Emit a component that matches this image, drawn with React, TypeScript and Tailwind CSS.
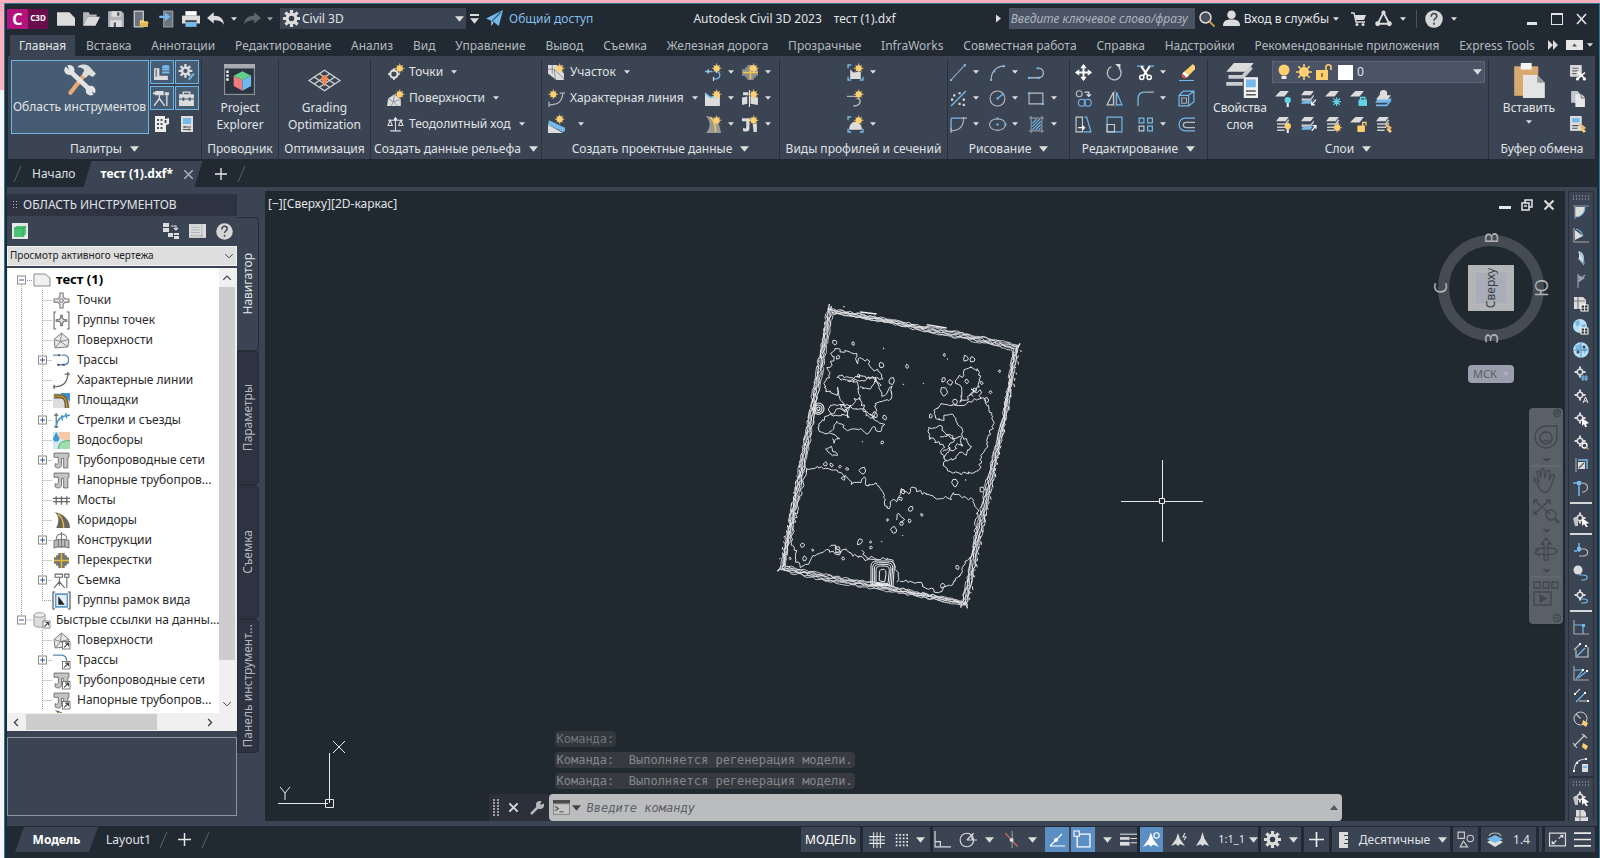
import type { ReactNode } from 'react';

const G = '#dcdcdc';
const B = '#74b9ea';
const Y = '#ffd070';

const line = (d: string, stroke = G, w = 1.1) => <path d={d} fill="none" stroke={stroke} strokeWidth={w} />;
const fill = (d: string, color = G) => <path d={d} fill={color} />;

// small "new object" sparkle in the corner of many ribbon icons
const spark = (x: number, y: number) => (
  <g transform={`translate(${x} ${y})`}>
    <path d="M0-4.500V4.500M-4.500 0H4.500M-3-3L3 3M3-3L-3 3" stroke={Y} strokeWidth=".8" />
    <circle r="2.900" fill={Y} />
  </g>
);

const sheets = (
  <>
    {fill('M4 1h9L10 5H1z')}
    {fill('M3 6l-1.500 2H10L13 4v2L10 10H1z', '#c8ccd0')}
    {fill('M2.500 10.500L1 13h9l3-5v1.500z', B)}
  </>
);
const sheetsGrey = (
  <>
    {fill('M4 1h9L10 5H1z')}
    {line('M2 7.500h8l3-4M2 10.500h8l3-4M2 13.500h7', '#c8ccd0', 1.4)}
  </>
);
const sheet = fill('M5 1h8L9 6H0z');
const target = (
  <>
    {line('M7 1.500v3M7 9.500v3M1.500 7h3M9.500 7h3', G, 2)}
    <circle cx="7" cy="7" r="2.700" fill="none" stroke={G} strokeWidth="1.500" />
  </>
);
const link = (
  <>
    <rect x="9" y="9" width="7" height="7" fill="#fff" stroke="#666" strokeWidth=".8" />
    {line('M10.500 14.500l4-4m-3 0h3v3', '#444')}
  </>
);
const pipe = (
  <path d="M1 1h14v4h-1v10h-4V6H8v6c0 3-3 4-6 2v-3c2 1 3 0 3-1V5H1z" fill="#c4c4c4" stroke="#666" strokeWidth=".8" />
);
const levels = (
  <>
    <path d="M1 7L8 1l7 6-1 7-12 1z" fill="#e8e8e8" stroke="#777" strokeWidth=".9" />
    {line('M1 7l6 2 8-2M8 1L7 9M2 15l5-6 7 5', '#777', 0.8)}
  </>
);

const icons: Record<string, ReactNode> = {
  newFile: <path d="M0 2h11l5 5v7H0z" fill={G} />,
  open: <>{fill('M1 14V2h5l1 2h6v2H5z', '#b5b5b5')}{fill('M5 6h11l-4 8H1z')}</>,
  save: <>{fill('M1 1h12l2 2v12H1z', '#aeb4ba')}{fill('M4 1h8v5H4zM3 9h10v6H3z')}{fill('M9 2h2v3H9zM6 11h2v4H6z', '#555')}</>,
  openWeb: <><rect x="2" y="1" width="8" height="14" fill="#6c737c" stroke={G} />{fill('M7 15V9h3l1 1h3v5z', Y)}{fill('M8 11h7l-2 4H7z', '#e6b557')}</>,
  saveWeb: <><rect x="6" y="1" width="8" height="14" fill="#6c737c" stroke="#9aa0a7" />{fill('M2 5h5V2l5 4-5 4V7H2z', B)}</>,
  print: <>{fill('M3 1h10v4H3z', '#fff')}{fill('M0 5h16v7H0z')}{fill('M3 9h10v2H3z', '#40474f')}{fill('M3 11h10v4H3z', B)}</>,
  undo: fill('M0 7l6-5v3c6 0 9 3 9 8-2-3-4-4-9-4v3z'),
  redo: fill('M16 7l-6-5v3c-6 0-9 3-9 8 2-3 4-4 9-4v3z', '#5d656f'),
  plane: <>{fill('M0 8L16 0l-4 15-5-4z', B)}{fill('M5 10v5l2-3z', '#b9defa')}{line('M6 10l8-8', '#26506e')}</>,
  search: <><circle cx="6.500" cy="6.500" r="5.500" fill="#4a5058" stroke={G} strokeWidth="1.500" />{line('M10.500 10.500l5 5', '#c99458', 2)}</>,
  user: <><circle cx="8" cy="4.500" r="4" fill={G} />{fill('M0 15c0-4 2-5 5-6h6c3 1 5 2 5 6z')}</>,
  cart: <>{line('M0 2h3l2 9h9', G, 1.3)}{fill('M3 4h12l-2 5H5z')}<circle cx="6" cy="13.500" r="1.500" fill={G} /><circle cx="12" cy="13.500" r="1.500" fill={G} /></>,
  hub: <>{line('M8 2.500L2.500 13h11z', G, 1.800)}<circle cx="8" cy="2.500" r="2" fill={G} /><circle cx="2.500" cy="13" r="2.300" fill={G} /><circle cx="13.500" cy="13" r="2.300" fill={G} /></>,
  help: <><circle cx="8" cy="8" r="7.800" fill="#d6d6d6" />{line('M5.500 6c0-4 5-3.500 5-.5 0 2-2.500 2-2.500 4M8 11v2', '#3b4453', 1.400)}</>,
  gear: (
    <>
      <g stroke={G} strokeWidth="3"><path d="M8 0v16M0 8h16M2.300 2.300l11.400 11.400M13.700 2.300L2.300 13.700" /></g>
      <circle cx="8" cy="8" r="5.500" fill={G} /><circle cx="8" cy="8" r="2.600" fill="#333c48" />
    </>
  ),
  tools: (
    <>
      <path d="M3.500 14L10.500 5" stroke="#e9a877" strokeWidth="2" strokeLinecap="round" />
      {fill('M7 1.500c3-1.500 5-.5 6 .8L15.500 5 14 6.600l-1.800-1L10.500 7 9 5.500l1-2C9.500 2.500 8.500 2 7 2z')}
      <path d="M3.500 4l9 8.500" stroke="#e4e4e4" strokeWidth="2.200" />
      <circle cx="3" cy="3.300" r="2.400" fill="#e4e4e4" /><circle cx="13" cy="13" r="2.300" fill="#e4e4e4" />
      {fill('M0 .5l3 2.800L1.500 0H0zM16 15l-2.500-1.700L15 16h1z', '#466079')}
    </>
  ),
  toolspace: <>{fill('M1 4h5v7h8v4H1z')}{line('M3 5v7', '#3f5a73', 1)}<ellipse cx="12" cy="2.500" rx="3.500" ry="1.500" fill={B} />{fill('M8.500 4h7v2h-7zM8.500 7h7v2h-7z', B)}</>,
  settings: <><g stroke={G} strokeWidth="2.200"><path d="M7 0v13M.5 6.500h13M2.400 2l9 9M11.500 2L2.500 11" /></g><circle cx="7" cy="6.500" r="4.200" fill={G} /><circle cx="7" cy="6.500" r="2" fill="#3f5a73" />{line('M10 15l5-6', B, 1.800)}</>,
  survey: <>{fill('M2 1h8v4H2zM0 2h2v2H0zM11 2h4v3h-4z')}{line('M6 5v4M6 8l-5 7M6 8l5 7M13 5v10', G, 1.300)}</>,
  toolbox: <>{line('M5 4V2h6v2', G, 1.400)}{fill('M1 4h14v4H1zM1 9h14v6H1z')}{fill('M4 7h2v3H4zM10 7h2v3h-2z', '#3f5a73')}</>,
  calc: <>{fill('M1 0h10v3l4-1v6l-3 1v7H1z', '#eee')}<g fill="#4a5261"><path d="M3 3h2v2H3zM6.500 3h2v2h-2zM3 7h2v2H3zM6.500 7h2v2h-2zM3 11h2v2H3zM6.500 11h2v2h-2zM10.500 4h2v3h-2z" /></g></>,
  props: <>{fill('M2 0h12v16H2z')}{fill('M4 2h8v6H4z', B)}{line('M4 11h8M4 13.500h8M6 10v2M10 12.500v2', '#555')}</>,
  points: <><circle cx="6.500" cy="9.500" r="3.500" fill="none" stroke={G} strokeWidth="2" />{line('M6.500 4v3M6.500 12v3M1 9.500h3M9 9.500h3', G, 1.600)}{spark(12, 4)}</>,
  surfaces: <>{fill('M0 15l1-7 6-4 6 5v6z')}{line('M1 8l5 3 6-2M6 11l-2 4M6 11l4 4M7 4l-1 7', '#828a94', 0.8)}{spark(12, 4)}</>,
  traverse: <>{line('M8 1v13M3 14h10M1 4h14M3 4L1 9h4zM13 4l-2 5h4z', G, 1)}<circle cx="8" cy="3" r="1.500" fill={G} /></>,
  parcel: <>{fill('M0 1h15v14H8L0 9z')}{line('M0 5h6l9 9M4 1v8M6 5l1 10', '#7f8790', 0.8)}{fill('M8 1h7v8z', '#3b4453')}{spark(11, 4)}</>,
  feature: <>{line('M1 14c8 0 12-2 13-11M1 11v5M11 3h5', '#aeb3b9', 1.200)}{spark(5, 4)}</>,
  grading: <>{fill('M0 8v8h14z')}{fill('M1 4l15 7v3l-2 1L0 8z', B)}{spark(11, 3)}</>,
  alignment: <>{line('M0 7h7M9 7h2c4 1 4 7-1 7H8', B, 1.300)}{line('M3 5v4M8 12v4', G)}{spark(11, 4)}</>,
  profile: <>{fill('M0 3l5 4 9-3v11H0z')}{line('M0 3l5 4 4-1', B, 1.500)}{spark(11, 4)}</>,
  corridor: <>{fill('M1 0c9 1 13 6 14 16H1C6 10 5 5 1 0z', '#999')}{line('M5 1c4 4 5 8 5 14', '#e9c551', 1.500)}{spark(11, 4)}</>,
  intersection: <>{fill('M5 1h6v14H5zM0 5h15v6H0zM3 3h10v10H3z', '#8f8f8b')}{line('M8 2v12M1 8h14', '#e9c551', 1.400)}{spark(11, 4)}</>,
  assembly: <>{fill('M0 7l5-1v7l-5 1zM8 6l7 1v7l-7-1zM1 2h5v3H1z')}{line('M7 0v16', '#eee', 1)}{spark(11, 4)}</>,
  pipes: <>{fill('M0 2h8v3H7v7c0 3-4 3-6 2v-3c2 1 3 1 3-1V5H0zM10 7h4v8h-3z')}{spark(11, 4)}</>,
  profileView: <>{line('M1 4V1h3M1 12v3h3M12 15h3v-3', B, 1.300)}{fill('M3 5l3 3 7-1v7H3z')}{spark(11, 4)}</>,
  sampleLines: <>{line('M0 6h9M9 8c5-1 5 7-3 7', '#aeb3b9', 1.400)}{spark(11, 4)}</>,
  sectionView: <>{line('M1 4V1h3M1 12v3h3M12 15h3v-3', B, 1.300)}{fill('M2 13c0-10 12-10 12 0z')}{spark(11, 4)}</>,
  line: <>{line('M1 15L14 1', '#8fa7ba')}{fill('M0 14h2v2H0zM13 0h2v2h-2z', B)}</>,
  arc: <>{line('M2 15C2 7 7 2 14 2', '#aeb3b9')}{fill('M1 14h2v2H1zM4 6h2v2H4zM13 1h2v2h-2z', B)}</>,
  pline: <>{line('M1 13h9c6 0 6-9 0-9', '#aeb3b9', 1.300)}{fill('M0 12h2v2H0zM9 12h2v2H9zM8 3h2v2H8z', B)}</>,
  multiPoint: <>{line('M1 15L15 1', B, 1.200)}{fill('M3 4h2v2H3zM8 2h2v2H8zM1 8h2v2H1zM8 12h2v2H8zM12 8h2v2h-2zM12 13h2v2h-2z')}</>,
  circle: <><circle cx="8" cy="8" r="7" fill="none" stroke="#b9bdc2" />{line('M8 8l5-4', B, 1.300)}{fill('M7 7h2v2H7zM12 3h2v2h-2z', B)}</>,
  rect: <>{line('M1 3h13v10H1z', '#b9bdc2')}{fill('M0 2h2v2H0zM13 12h2v2h-2z', B)}</>,
  curve: <>{line('M1 2h9M1 2v12', B, 1.200)}{line('M1 14c8 0 12-4 12-13M10 2h6M1 11v5', '#b9bdc2', 1)}</>,
  ellipse: <><ellipse cx="8" cy="8" rx="7.500" ry="5.500" fill="none" stroke="#b9bdc2" />{fill('M7 7h2v2H7zM14.500 7h2v2h-2zM7 1.500h2v2H7z', B)}</>,
  hatch: <>{line('M1 2h14M1 14h14M3 0v16M13 0v16', '#8d949d')}{line('M4 7l4-4M4 10l7-7M4 13l8-8M7 13l5-5M10 13l2-2', B)}</>,
  move: <>{line('M8 1v14M1 8h14', '#fff', 1.800)}{fill('M8 0l3 4H5zM8 16l3-4H5zM0 8l4-3v6zM16 8l-4-3v6z', '#fff')}</>,
  rotate: <>{line('M5 2.500a6.500 6.500 0 1 0 7 1', '#b9bdc2', 1.300)}{fill('M8.500 0h5v4.500z')}</>,
  trim: <>{line('M0 2h7M11 2h5', B, 1.200)}{line('M4 2l6 9M12 2L6 11', '#fff', 1.900)}<circle cx="4.500" cy="12.500" r="2" fill="none" stroke="#fff" strokeWidth="1.400" /><circle cx="11.500" cy="12.500" r="2" fill="none" stroke="#fff" strokeWidth="1.400" /></>,
  erase: <>{fill('M14 0l2 2v3l-7 7-4-4z', Y)}{fill('M6 7l4 4-2 2-4-4z', '#fff')}{fill('M4 9l4 4c-2 2-6-1-4-4z', '#e0524d')}{line('M1 15.500h14', B, 1)}</>,
  copy: <><circle cx="4" cy="3.500" r="2.800" fill="none" stroke="#b9bdc2" /><circle cx="6.500" cy="12" r="3.300" fill="none" stroke={B} /><circle cx="12" cy="12" r="3.300" fill="none" stroke={B} />{line('M9 2h4v4M11 4l2 2 2-2')}</>,
  mirror: <>{line('M7 2v12H1z', '#c5c9cd')}{line('M10 2v12h5z', B)}{line('M8.500 0v16', '#8d949d', 0.8)}</>,
  fillet: <>{line('M1 15V8c0-5 3-6 7-6', B, 1.200)}{line('M8 2h8', '#b9bdc2')}</>,
  box3d: <>{line('M1 5h9v10H1zM1 5l4-4h10v10l-5 4M10 5l5-4', B)}{line('M3.500 7.500h4.500v5H3.500z', '#a5abb3')}</>,
  stretch: <>{line('M1 1h6v14H1z', '#c5c9cd')}{line('M9 1h2l4 14H8', B)}{line('M3 11h6M7 9l2 2-2 2', '#fff')}</>,
  scale: <>{line('M1 1h14v14H1z', B)}{line('M1 8h7v7H1z', '#c5c9cd')}</>,
  array: <>{line('M2 2h4.500v4.500H2zM10 2h4.500v4.500H10zM10 9.500h4.500V14H10z', B)}{line('M2 9.500h4.500V14H2z', '#c5c9cd')}</>,
  offset: <>{line('M16 2H7c-8 0-8 12 0 12h9', B)}{line('M16 6H8c-4 0-4 5 0 5h8', '#b9bdc2')}</>,
  lyOff: <>{sheet}{line('M12 12v4', '#eee', 2)}<circle cx="12" cy="9.500" r="3" fill="#62d5e4" /></>,
  lyIso: <>{sheets}{line('M15 9l-4 5m0-3v3h3', '#fff', 1.200)}</>,
  lyFreeze: <>{sheet}{line('M11 7v8M7 11h8M8 8l6 6M14 8l-6 6', '#62d5e4', 1.200)}</>,
  lyLock: <>{sheet}{line('M10 10V7h4v3', '#62d5e4', 1.300)}{fill('M8 9h8v6H8z', '#62d5e4')}</>,
  lyMatch: <>{line('M1 14.500h10l4-5', B, 1.500)}{fill('M3 8h13l-4 4H0z', B)}{fill('M4 5h11l-3 4H1z')}<circle cx="8" cy="3.500" r="3.500" fill={G} /></>,
  lyOn: <>{sheetsGrey}{line('M12 12v4', '#eee', 2)}<circle cx="12" cy="9.500" r="3" fill={Y} /></>,
  lyUniso: <>{sheets}{line('M11 14l4-5m-3 0h3v3', '#fff', 1.200)}</>,
  lyThaw: <>{sheetsGrey}{spark(11.5, 11)}</>,
  lyUnlock: <>{sheet}{line('M12 10V6h3v3', Y, 1.300)}{fill('M7 9h7v6H7z', Y)}</>,
  lyPrev: <>{sheetsGrey}{fill('M9 8l5 5 2-2-5-4z', '#e9b977')}{fill('M12 11l4 3-2 2-3-3z', Y)}</>,
  layersBig: <>{fill('M5 0h9l-3 4H1.500z')}{line('M2.500 6.300H9L13 2M1.500 9.500H9', '#c8ccd0', 1.700)}{fill('M9.500 6.500h6.500V16H9.500z', '#f2f2f2')}{fill('M10.500 7.500H15v3.600h-4.500z', B)}{line('M10.500 12.800H15M10.500 14.500H15', '#555', 0.6)}</>,
  bulb: <><circle cx="8" cy="6" r="5.500" fill={Y} />{fill('M5.500 12h5v3h-5z', '#eee')}</>,
  sun: <><g stroke={Y} strokeWidth="1.600"><path d="M8 0v16M0 8h16M2.300 2.300l11.400 11.400M13.700 2.300L2.300 13.700" /></g><circle cx="8" cy="8" r="5" fill={Y} /></>,
  unlock: <>{line('M10 7V3c0-3 5-3 5 0v3', Y, 1.600)}{fill('M0 6h12v10H0z', Y)}{line('M6 9v4', '#7a5f28', 1.500)}</>,
  paste: <>{fill('M1 1.500h11V15H1z', '#d8a970')}{fill('M4 0h5v3H4z', '#f4f4f4')}{fill('M5 5.500h6.500L15 9v7H5z', '#e4e4e4')}{fill('M11.500 5.500L15 9h-3.500z', '#9a9a9a')}</>,
  cutClip: <>{fill('M1 1h11v11H1z')}{line('M3 4h6M3 6.500h6M3 9h4', '#666')}{line('M8 7l6 6M15 8l-7 6', '#fff', 1.500)}<circle cx="8" cy="14" r="1.500" fill="#fff" /><circle cx="14.500" cy="14" r="1.500" fill="#fff" /></>,
  copyClip: <>{fill('M2 1h6l2 2v9H2z', '#c3c7cb')}{fill('M6 4h6l3 3v9H6z', '#e8e8e8')}{line('M11.500 4v3.500H15', '#555', 0.8)}</>,
  pasteSpec: <>{fill('M1 0h11v14H1z')}{fill('M3 2h7v4H3z', B)}{line('M3 9h6M3 11.500h5', '#555')}{fill('M9 8l5 5 2-2-5-4z', '#e9b977')}{fill('M12 11l4 3-2 2-3-3z', Y)}</>,
  explorer: <>{fill('M0 0h16v16H0z', '#8b8f95')}{fill('M.6 2.400h14.800v13H.6z', '#2c3440')}{fill('M0 0h16v2H0z', '#a9acb0')}{fill('M1.200 3.400h1.200v1.200H1.200zM1.200 5.400h1.200v1.200H1.200zM1.200 7.400h1.200v1.200H1.200z', '#fff')}{fill('M9.500 3.800L14 6l-4.500 2.400L5 6z', '#62cf8a')}{fill('M5 6l4.500 2.400v5.400L5 11.300z', '#f07d7d')}{fill('M14 6L9.500 8.400v5.400l4.500-2.500z', '#6fb8f0')}</>,
  optimize: <>{line('M8 3l7.500 5L8 13 .5 8zM5.500 4.700L13 9.700M3 6.300l7.500 5M10.500 4.700L3 9.700M13 6.300l-7.500 5', '#d5d5d5', 0.6)}{fill('M6.300 6.800h3.400L8 11z', '#ef8a4b')}<circle cx="8" cy="7" r="1.500" fill="#ef8a4b" /></>,
  // toolspace header
  cube: <>{fill('M0 0h16v16H0z', '#e6e6e6')}{fill('M2 5l3-2h9v8l-3 3H2z', '#48c474')}{line('M2 5h9v9M11 5l3-2', '#2f9d57', 0.8)}</>,
  panorama: <>{fill('M0 0h6v4H0zM0 5h6v4H0zM5 10h5v4H5zM11 10h5v2h-5zM11 13h5v3h-5z')}{line('M8 3h5v4M11 5l2 2 2-2')}</>,
  preview: <>{fill('M0 1h16v13H0z')}{line('M2 4h8M2 6.500h8M2 9h8M12 2v11M1 12h12', '#a5a9ae', 0.8)}</>,
  // tree
  tDoc: <path d="M0 2h11l5 4v8H0z" fill="#f0f0f0" stroke="#8a8a8a" />,
  tPoint: <><g fill="none" stroke="#777"><path d="M6.500 1h3v3.500l2 2H15v3h-3.500l-2 2V15h-3v-3.500l-2-2H1v-3h3.500l2-2z" fill="#eee" /><circle cx="8" cy="8" r="1.700" /></g></>,
  tGroup: <><g fill="none" stroke="#666"><path d="M3 0H1v16h2M13 0h2v16h-2" /><path d="M7.300 3h1.400v2.500l1.800 1.800H13v1.400h-2.500l-1.800 1.800V13H7.300v-2.500L5.500 8.700H3V7.300h2.500l1.800-1.800z" fill="#ddd" /></g></>,
  tSurface: levels,
  tAlign: <>{line('M0 3h6M8 3h3c5 1 5 9-1 9H5', '#5a88b5', 1.200)}{fill('M5 2h2v2H5zM9 11h2v2H9zM4 11h2v2H4z', '#555')}</>,
  tFeature: line('M0 14c9 0 14-3 14-14M11 2h5M1 12v4', '#666', 1.200),
  tSite: <>{fill('M0 1h16v14H0z', '#ddd')}{fill('M7 1h9v8z', '#3d8fce')}{fill('M1 2h6c6 0 8 5 8 13h-4c0-7-1-9-5-9H1z', '#6e6246')}{line('M1 4h6c5 0 6 5 6 11', '#d9a520', 1)}</>,
  tCatch: <>{fill('M0 0h16v16H0z', '#cfe9f8')}{fill('M6 0h10v8L5 6z', '#f5c9a4')}{fill('M5 16c0-6 4-8 11-8v8z', '#9fdcae')}{fill('M3 0l3 6c0 4-6 4-6 0z', '#3f97d0')}{line('M5 16c0-6 4-8 11-8', '#4b9e62', 0.8)}</>,
  tTurn: <>{line('M3 1v14M1 3h4M1 14h4', '#666')}{line('M3 13C4 7 8 3 16 3M8 3l1 5M12 1l1 5', '#3f97d0', 1.300)}</>,
  tPipe: pipe,
  tBridge: <>{line('M0 6h16M0 9h16M3 4v8M8 4v8M13 4v8', '#666', 1.200)}</>,
  tRoad: <>{fill('M1 0c5 2 5 10 2 15h13C16 7 9 1 1 0z', '#66645d')}{line('M5 2c4 4 5 7 5 13', '#e4bb3a', 1.500)}</>,
  tAssembly: <><path d="M1 8l4-1v7l-4 1zM15 8l-4-1v7l4 1zM5 7h6v7H5z" fill="#bbb" stroke="#777" /><path d="M3 7c0-7 10-7 10 0M8 0v15" fill="none" stroke="#777" /></>,
  tCross: <>{fill('M5 1h6v14H5zM1 5h14v6H1z', '#77756d')}{fill('M3 3h10v10H3z', '#77756d')}{line('M8 1v14M1 8h14', '#e4bb3a', 1.300)}</>,
  tSurvey: <><g fill="none" stroke="#666"><path d="M2 2h7v3H2zM11 2h4v3h-4zM6 5v4L1 15M6 9l5 6M6 9v4M13 5v10" /></g></>,
  tFrames: <>{line('M2 0H0v16h2M14 0h2v16h-2', '#555')}<path d="M2.500 2h11v12h-11z" fill="#e6eef6" stroke="#5d9bd0" strokeWidth="1.500" />{fill('M5 4v8h6z', '#222')}</>,
  tData: <><path d="M0 3v10c0 3 11 3 11 0V3" fill="#ddd" stroke="#999" /><ellipse cx="5.500" cy="3" rx="5.500" ry="2.300" fill="#eee" stroke="#999" />{link}</>,
  tSurfaceL: <>{levels}{link}</>,
  tAlignL: <>{line('M0 3h8c4 0 5 3 5 7', '#5a88b5', 1.200)}{link}</>,
  tPipeL: <>{pipe}{link}</>,
  // side toolbar
  sArc: <>{fill('M2 3h10c0 6-4 10-10 10z')}{line('M0 2h16M2 2v13', '#8d97a3')}{line('M12 3c0 6-4 10-9 10', B)}</>,
  sAngle: <>{fill('M2 3l8 6-8 4z')}{line('M1 1v13', '#aaa')}{line('M0 15h16', '#aaa', 1)}{line('M3 2c3 1 6 3 7 7', B)}</>,
  sLens: <>{fill('M6 1c5 2 6 7 4 12L6 9z')}{line('M5 2c4 2 6 5 6 12', B)}{line('M5 8l6 7', '#aaa')}</>,
  sFlag: <>{fill('M5 2l7 3-6 4z', '#9aa3ad')}{line('M5 1v14M5 9l7-7', '#99a3ad')}</>,
  sSheet: <>{fill('M1 1h9l3 3v9H1z')}{line('M1 5h11M5 1v12', '#777')}<rect x="8" y="9" width="7" height="6" fill="#333" stroke="#fff" />{line('M11.500 9v6M8 12h7', '#fff', 0.8)}</>,
  sGlobe: <><circle cx="7" cy="7" r="7" fill="#b8e0f8" />{fill('M2 3l4-2 1 4-3 3zM8 6l5-1-2 6z', B)}<rect x="8" y="9" width="7" height="6" fill="#333" stroke="#fff" />{line('M11.500 9v6M8 12h7', '#fff', 0.8)}</>,
  sGlobe2: <><circle cx="8" cy="8" r="7.800" fill="#b8e0f8" />{fill('M2 4l5-2 1 4-4 3zM9 7l5-1-2 6z', B)}{line('M1 8h14M8 1v14', '#3b6d92', 0.7)}<circle cx="5" cy="10" r="1.500" fill="#3b4453" /><circle cx="11" cy="5" r="1.500" fill="#3b4453" /></>,
  sPtHash: <>{target}{line('M10 10v6M13 10v6M8 12h7M8 14h7', B)}</>,
  sPtA: <>{target}{line('M10 15l2.500-6L15 15M11 13h3', '#eee', 1)}</>,
  sPtCur: <>{target}{fill('M9 7l7 5-3 1 1 3-2 0-1-3-2 2z', '#fff')}</>,
  sPtZoom: <>{target}<circle cx="11.500" cy="11.500" r="2.500" fill="none" stroke="#fff" strokeWidth="1.300" />{line('M13.500 13.500l2 2', '#c99458', 1.500)}</>,
  sFrame: <>{line('M3 1v14', '#aaa')}{line('M5 3h9v9', B, 1.500)}{fill('M5 5h7v7H5z')}{line('M6 11l5-5', '#555')}</>,
  sTee: <>{line('M0 3h7M6 3v13', B, 1.500)}{line('M8 3c9 0 8 9 1 9', '#bbb', 1.200)}{fill('M4 1h4v4H4z', B)}</>,
  sCursorPt: <>{target}{fill('M0 7h5v8H2z', '#c4c4c4')}{fill('M9 7l7 5-3 1 2 3-2 0-2-3-2 2z', '#fff')}</>,
  sHook: <>{line('M1 9h3M6 1v9', B, 1.500)}{line('M5 7h6c5 0 5 7-1 7H6', '#bbb', 1.200)}{fill('M4 5h4v4H4z', B)}</>,
  sBlob: <><circle cx="5" cy="5" r="4.500" fill={G} />{line('M6 10h4c6 0 5 5 0 5H8', B, 1.200)}</>,
  sPtHook: <>{target}{line('M8 11h3c5 0 4 4 0 4H8', B, 1.200)}</>,
  sCorner: <>{line('M1 1v14h15', '#aaa')}{line('M1 6h9v9', B, 1.200)}{fill('M9 5h3v3H9z', B)}</>,
  sPoly: <>{line('M1 8l6-6M3 8v7h12V5', '#ccc')}{line('M4 14L12 6', B, 1.200)}{fill('M6 1h2v2H6zM12 3h2v2h-2z', '#fff')}</>,
  sZig: <>{line('M1 1v14h15', '#aaa')}{line('M1 5h9L3 14M5 13l8-6', B, 1.200)}{fill('M9 4h2v2H9zM13 5h2v2h-2z', '#fff')}</>,
  sPar: <>{line('M2 6l5-5M6 13h9', '#ccc')}{line('M3 14L12 5', B, 1.200)}{fill('M1 5h2v2H1zM11 4h2v2h-2zM14 12h2v2h-2z', '#fff')}</>,
  sCirc: <><circle cx="7.500" cy="7.500" r="6.500" fill="none" stroke="#ccc" />{line('M7.500 7.500L3 3', '#ccc')}{fill('M10 9l5 3-2 4-4-3z', Y)}</>,
  sDim: <>{line('M1 12L12 1M0 9l4 5M9 0l5 4', '#ccc')}{fill('M10 9l5 3-2 4-4-3z', Y)}</>,
  sArcCalc: <>{line('M1 15C1 6 5 2 14 2', '#ccc')}{fill('M0 13h2v2H0zM3 5h2v2H3zM12 1h2v2h-2z', '#fff')}{fill('M9 7h6v8H9z')}{fill('M10 9h4v2h-4z', B)}</>,
  sBlocks: <>{fill('M3 2h8l2 3v4h2v7H2V9h1z')}{line('M7 2v14M3 9h10', '#555', 0.8)}</>,
  // status bar
  grid: line('M5 1v14M8 1v14M11 1v14M1 5h14M1 8h14M1 11h14', '#e3e3e3', 0.9),
  snap: <g fill="#e3e3e3"><path d="M2 1h2v2H2zM6 1h2v2H6zM10 1h2v2h-2zM14 1h2v2h-2zM2 5h2v2H2zM6 5h2v2H6zM10 5h2v2h-2zM14 5h2v2h-2zM2 9h2v2H2zM6 9h2v2H6zM10 9h2v2h-2zM14 9h2v2h-2zM2 13h2v2H2zM6 13h2v2H6zM10 13h2v2h-2zM14 13h2v2h-2z" /></g>,
  ortho: <>{line('M1 0v15h15', G)}{line('M1 10h5v5', G)}</>,
  polar: <><circle cx="7" cy="8" r="6" fill="none" stroke={G} />{line('M7 8h9M7 8l6-6M12 8c0-2 0-3-2-4', G)}</>,
  iso: <>{line('M3 2l11 12', '#c66')}{line('M9 0v15', '#7a9a86')}<circle cx="8.500" cy="8" r="1.800" fill={G} /></>,
  otrack: <>{line('M1 14L13 2M1 14h15', '#fff')}<circle cx="7" cy="8" r="2" fill="#fff" /></>,
  osnap: <>{line('M3 3h12v12H3z', '#fff', 1.200)}<path d="M0 0h5v5H0z" fill="#5b8fc4" stroke="#fff" /></>,
  weight: <>{line('M0 3h16', G, 1)}{line('M0 7h9', G, 2.500)}{line('M0 12h9', G, 3.500)}{line('M10 7h6M10 11h6', G, 1)}</>,
  annoBlue: <>{fill('M7 1l2 6 5 7-5-2-2 2-2-2-5 2 5-7z', '#fff')}<circle cx="12" cy="4" r="2.400" fill="none" stroke="#fff" /></>,
  annoFlash: <>{fill('M7 1l2 6 5 7-5-2-2 2-2-2-5 2 5-7z')}{line('M14 1l-2 4h3l-2 3', G)}</>,
  anno: fill('M8 0l2 7 5 8-5-2-2 2-2-2-5 2 5-8z'),
  plus: line('M8 0v16M0 8h16', '#e8e8e8', 1.800),
  ruler: <>{fill('M4 0h9v3h-4v1h4v3h-3v1h3v3h-4v1h4v4H4z')}</>,
  shapes: <>{line('M1 1h6v6H1z', '#c9c9c9')}<circle cx="12.500" cy="7" r="3" fill="none" stroke="#c9c9c9" />{line('M6 9.500L10 15H3z', '#c9c9c9')}</>,
  stack: <>{line('M2 4c2-4 10-4 12 0', '#bbb')}{fill('M0 10l8-4 8 4-8 5z', '#e0e0e0')}{fill('M0 7l8-4 8 4-8 4z', B)}</>,
  full: <>{line('M.5 2h15v12H.5z', G)}{line('M9 7l4-3M10.500 4H13v2.500M7 9l-4 3M3 9.500V12h2.500', G)}</>,
  burger: line('M0 2h16M0 8h16M0 14h16', '#e8e8e8', 1.600),
  console: <>{fill('M0 1h16v14H0z', '#8a8a8a')}{fill('M1 5h14v9H1z', '#c4c5c6')}{fill('M0 1h16v3H0z', '#4a4a4a')}{line('M2 7l3 2-3 2M6 12h4', '#555')}</>,
  wrench: <>{line('M2 14l7-7', '#b5b7ba', 2.500)}<circle cx="11" cy="5" r="4" fill="#b5b7ba" />{fill('M11 5l2-5h3v3z', '#2b303b')}</>,
  cross: line('M2 2l12 12M14 2L2 14', '#d5d5d5', 3),
  chevronDown: line('M2 5l6 6 6-6', '#444', 1.600),
  chevronUp: line('M2 11l6-6 6 6', '#444', 2),
  chevronLeft: line('M10 3L5 8l5 5', '#444', 2),
  chevronRight: line('M6 3l5 5-5 5', '#444', 2),
};

function Icon({ name, size = 18 }: { name: string; size?: number }) {
  return (
    <svg viewBox="0 0 16 16" width={size} height={size} className="shrink-0 overflow-visible" aria-hidden="true">
      {icons[name]}
    </svg>
  );
}

const Caret = ({ big = false, color = G }: { big?: boolean; color?: string }) => (
  <svg viewBox="0 0 10 6" width={big ? 9 : 6} height={big ? 6 : 4} className="shrink-0" aria-hidden="true">
    <path d="M0 0h10L5 6z" fill={color} />
  </svg>
);

function IconButton({ name, label, size, className = '' }: { name: string; label?: string; size?: number; className?: string }) {
  return (
    <button aria-label={label ?? name} className={`flex items-center justify-center shrink-0 ${className}`}>
      <Icon name={name} size={size} />
    </button>
  );
}

function Title() {
  return (
    <header className="flex items-center h-[29px] text-[#e2e4e6]">
      <div className="flex items-center w-[41px] h-5 shrink-0 bg-[#6b0c4c] text-white font-bold">
        <span className="w-[21px] h-5 bg-[#b3117c] text-center text-base leading-5">C</span>
        <span className="flex-1 text-center text-[8px]">C3D</span>
      </div>
      <div className="flex items-center ml-[5px] shrink-0">
        {['newFile', 'open', 'save', 'openWeb', 'saveWeb', 'print', 'undo'].map((n) => (
          <IconButton key={n} name={n} className="w-[25px]" />
        ))}
        <button aria-label="undo list" className="w-3 flex justify-center"><Caret /></button>
        <IconButton name="redo" className="w-6" />
        <button aria-label="redo list" className="w-3 flex justify-center"><Caret color="#9aa0a7" /></button>
      </div>
      <div className="relative flex items-center w-[186px] h-[21px] shrink-0 ml-1 pl-[3px] bg-[#3b4453]">
        <Icon name="gear" size={17} />
        <select aria-label="Рабочее пространство" className="flex-1 appearance-none bg-transparent pl-0.5 outline-none">
          <option>Civil 3D</option>
        </select>
        <span className="absolute right-0.5 pointer-events-none"><Caret big /></span>
      </div>
      <button aria-label="customize" className="flex flex-col items-center gap-0.5 w-4"><i className="w-[9px] h-0.5 bg-[#dcdcdc]" /><Caret big /></button>
      <button className="flex items-center gap-1.5 ml-1 text-[#83bfe9] whitespace-nowrap"><Icon name="plane" size={17} />Общий доступ</button>
      <h1 className="flex-1 flex justify-center gap-3 whitespace-nowrap"><span>Autodesk Civil 3D 2023</span><span>тест (1).dxf</span></h1>
      <svg viewBox="0 0 5 8" width="5" height="9" className="mr-2 shrink-0"><path d="M0 0l5 4-5 4z" fill={G} /></svg>
      <input aria-label="Поиск" placeholder="Введите ключевое слово/фразу" className="w-[186px] h-[21px] px-0.5 bg-[#4a5364] italic text-xs placeholder:text-[#aeb4bc] outline-none shrink-0" />
      <IconButton name="search" size={16} className="w-6" />
      <button className="flex items-center gap-1 ml-1 whitespace-nowrap"><Icon name="user" size={17} />Вход в службы <Caret /></button>
      <IconButton name="cart" size={16} className="ml-3" />
      <button aria-label="apps" className="flex items-center gap-2 ml-2"><Icon name="hub" size={17} /><Caret /></button>
      <button aria-label="Справка" className="flex items-center gap-2 ml-2.5 pl-2 border-l border-[#4b525c]"><Icon name="help" /><Caret /></button>
      <div className="flex items-center justify-between w-[60px] ml-[70px] mr-2.5 shrink-0">
        <button aria-label="Свернуть" className="w-2.5 h-4 flex items-end"><i className="w-full h-[3px] bg-[#e2e4e6] mb-0.5" /></button>
        <button aria-label="Развернуть" className="w-3 h-3 border border-t-2 border-[#e2e4e6]" />
        <button aria-label="Закрыть"><svg width="11" height="12" viewBox="0 0 11 12"><path d="M1 1l9 10M10 1L1 11" stroke="#e2e4e6" strokeWidth="1.600" /></svg></button>
      </div>
    </header>
  );
}

const menu = [
  'Главная', 'Вставка', 'Аннотации', 'Редактирование', 'Анализ', 'Вид', 'Управление', 'Вывод', 'Съемка', 'Железная дорога',
  'Прозрачные', 'InfraWorks', 'Совместная работа', 'Справка', 'Надстройки', 'Рекомендованные приложения', 'Express Tools',
];

function Menu() {
  return (
    <nav className="flex items-center h-[23px] pl-[3px] text-[#b4b9bf]">
      <div className="flex-1 flex justify-between self-end">
        {menu.map((m, i) => (
          <button key={m} className={`h-[21px] px-[9px] whitespace-nowrap ${i === 0 ? 'bg-[#3b4453] text-[#e4e6e8]' : ''}`}>{m}</button>
        ))}
      </div>
      <button aria-label="more" className="ml-1 mr-2"><svg width="10" height="10" viewBox="0 0 10 10"><path d="M0 0l5 5-5 5zM5 0l5 5-5 5z" fill={G} /></svg></button>
      <button aria-label="ribbon state" className="flex items-center gap-1 mr-1">
        <span className="flex items-center justify-center w-[17px] h-2.5 bg-[#e6e6e6]"><svg width="5" height="4" viewBox="0 0 10 6"><path d="M0 6h10L5 0z" fill="#555" /></svg></span>
        <Caret />
      </button>
    </nav>
  );
}

function Panel({ title, caret = false, className, children }: { title: string; caret?: boolean; className: string; children: ReactNode }) {
  return (
    <section className={`flex flex-col border-r border-[#2a313c] last:border-r-0 ${className}`}>
      <div className="h-[78px] flex justify-center">{children}</div>
      <h2 className="flex items-center justify-center gap-2 h-[22px] pt-0.5 whitespace-nowrap">{title}{caret && <Caret big />}</h2>
    </section>
  );
}

// grid of small tools; names ending with "+" have a drop-down arrow
function Tools({ rows, cell }: { rows: string[][]; cell: string }) {
  return (
    <div>
      {rows.map((row) => (
        <div key={row[0]} className="flex h-[26px]">
          {row.map((r) => (
            <button key={r} aria-label={r.replace('+', '')} className={`flex items-center gap-1.5 shrink-0 ${cell}`}>
              <Icon name={r.replace('+', '')} size={17} />
              {r.endsWith('+') && <Caret />}
            </button>
          ))}
        </div>
      ))}
    </div>
  );
}

const textTool = (icon: string, label: string) => (
  <button className="flex items-center gap-[5px] h-[26px] whitespace-nowrap">
    <Icon name={icon} size={17} /><span className="pr-[3px]">{label}</span><Caret />
  </button>
);

const big = 'flex flex-col items-center leading-[17px]';

function Ribbon() {
  return (
    <div className="flex h-[103px] pt-[3px] ml-px mr-0.5 bg-[#3b4453] text-[#e0e3e6]">
      <Panel title="Палитры" caret className="w-[194px]">
        <button className="flex flex-col items-center w-[138px] h-[74px] mt-px pt-0.5 border border-[#6db3e3] bg-[#465c72] whitespace-nowrap">
          <Icon name="tools" size={34} />
          <span className="mt-0.5">Область инструментов</span>
        </button>
        <div className="grid grid-cols-2 gap-x-px ml-px mt-px content-start gap-y-0.5">
          {['toolspace', 'settings', 'survey', 'toolbox'].map((n) => (
            <IconButton key={n} name={n} size={17} className="w-6 h-6 border border-[#6db3e3] bg-[#465c72]" />
          ))}
          <IconButton name="calc" size={16} className="w-6 h-6" />
          <IconButton name="props" size={16} className="w-6 h-6" />
        </div>
      </Panel>
      <Panel title="Проводник" className="w-[77px]">
        <button className={`${big} pt-[5px]`}><Icon name="explorer" size={31} /><span className="mt-1">Project<br />Explorer</span></button>
      </Panel>
      <Panel title="Оптимизация" className="w-[92px]">
        <button className={`${big} pt-[5px]`}><Icon name="optimize" size={33} /><span className="mt-0.5">Grading<br />Optimization</span></button>
      </Panel>
      <Panel title="Создать данные рельефа" caret className="w-[171px]">
        <div className="flex-1 pl-4">
          {textTool('points', 'Точки')}
          {textTool('surfaces', 'Поверхности')}
          {textTool('traverse', 'Теодолитный ход')}
        </div>
      </Panel>
      <Panel title="Создать проектные данные" caret className="w-[238px]">
        <div className="flex-1 pl-1.5">
          {textTool('parcel', 'Участок')}
          {textTool('feature', 'Характерная линия')}
          {textTool('grading', '')}
        </div>
        <Tools rows={[['alignment+', 'intersection+'], ['profile+', 'assembly+'], ['corridor+', 'pipes+']]} cell="w-[37px]" />
      </Panel>
      <Panel title="Виды профилей и сечений" className="w-[168px]">
        <Tools rows={[['profileView+'], ['sampleLines'], ['sectionView+']]} cell="w-[34px]" />
      </Panel>
      <Panel title="Рисование" caret className="w-[122px]">
        <Tools rows={[['line+', 'arc+', 'pline'], ['multiPoint+', 'circle+', 'rect+'], ['curve+', 'ellipse+', 'hatch+']]} cell="w-[39px]" />
      </Panel>
      <Panel title="Редактирование" caret className="w-[138px]">
        <div className="flex pl-2">
          <Tools rows={[['move', 'rotate'], ['copy', 'mirror'], ['stretch', 'scale']]} cell="w-[31px]" />
          <Tools rows={[['trim+', 'erase'], ['fillet+', 'box3d'], ['array+', 'offset']]} cell="w-[33px] first:w-[41px]" />
        </div>
      </Panel>
      <Panel title="Слои" caret className="flex-1">
        <button className={`${big} w-[64px] pt-1 shrink-0`}><Icon name="layersBig" size={35} /><span className="mt-px">Свойства<br />слоя</span></button>
        <div className="flex-1 pr-[3px]">
          <div className="relative flex items-center gap-1 h-[22px] mt-0.5 mb-0.5 pl-[3px] border border-[#5a6475] bg-[#4a5466]">
            <Icon name="bulb" size={16} /><Icon name="sun" size={16} /><Icon name="unlock" size={16} />
            <span className="w-[15px] h-[15px] ml-0.5 bg-white" />
            <select aria-label="Слой" className="flex-1 appearance-none bg-transparent outline-none"><option>0</option></select>
            <span className="absolute right-0.5 pointer-events-none"><Caret big /></span>
          </div>
          <div className="pl-[3px]">
            <Tools rows={[['lyOff', 'lyIso', 'lyFreeze', 'lyLock', 'lyMatch'], ['lyOn', 'lyUniso', 'lyThaw', 'lyUnlock', 'lyPrev']]} cell="w-[25px]" />
          </div>
        </div>
      </Panel>
      <Panel title="Буфер обмена" className="w-[106px]">
        <button className={`${big} flex-1 pt-1`}><Icon name="paste" size={35} /><span className="mt-px mb-1">Вставить</span><Caret /></button>
        <div className="pr-2"><Tools rows={[['cutClip'], ['copyClip'], ['pasteSpec']]} cell="w-[18px]" /></div>
      </Panel>
    </div>
  );
}

const Slash = () => <svg width="9" height="18" viewBox="0 0 9 18"><path d="M1 17L8 1" stroke="#5a616b" /></svg>;

function DocTabs() {
  return (
    <div className="flex items-center h-[28px] pl-1.5 pt-0.5 text-[#dfe2e5]">
      <Slash />
      <button className="ml-2.5 mr-2">Начало</button>
      <div className="flex items-center justify-between w-[119px] h-[26px] self-end pl-[17px] pr-2.5 bg-[#3b4453] [clip-path:polygon(8px_0,100%_0,calc(100%_-_8px)_100%,0_100%)]">
        <button className="font-bold text-white whitespace-nowrap">тест (1).dxf*</button>
        <button aria-label="Закрыть вкладку"><svg width="9" height="9" viewBox="0 0 9 9"><path d="M0 0l9 9M9 0L0 9" stroke="#a9aeb4" strokeWidth="1.500" /></svg></button>
      </div>
      <IconButton name="plus" label="Новая вкладка" size={12} className="ml-3 mr-2.5" />
      <Slash />
    </div>
  );
}

type Node = { icon: string; label: string; open?: boolean; root?: boolean; second?: boolean; last?: boolean };

const tree: Node[] = [
  { icon: 'tDoc', label: 'тест (1)', root: true },
  { icon: 'tPoint', label: 'Точки' },
  { icon: 'tGroup', label: 'Группы точек' },
  { icon: 'tSurface', label: 'Поверхности' },
  { icon: 'tAlign', label: 'Трассы', open: true },
  { icon: 'tFeature', label: 'Характерные линии' },
  { icon: 'tSite', label: 'Площадки' },
  { icon: 'tTurn', label: 'Стрелки и съезды', open: true },
  { icon: 'tCatch', label: 'Водосборы' },
  { icon: 'tPipe', label: 'Трубопроводные сети', open: true },
  { icon: 'tPipe', label: 'Напорные трубопров...' },
  { icon: 'tBridge', label: 'Мосты' },
  { icon: 'tRoad', label: 'Коридоры' },
  { icon: 'tAssembly', label: 'Конструкции', open: true },
  { icon: 'tCross', label: 'Перекрестки' },
  { icon: 'tSurvey', label: 'Съемка', open: true },
  { icon: 'tFrames', label: 'Группы рамок вида', last: true },
  { icon: 'tData', label: 'Быстрые ссылки на данны...', root: true, second: true },
  { icon: 'tSurfaceL', label: 'Поверхности', second: true },
  { icon: 'tAlignL', label: 'Трассы', open: true, second: true },
  { icon: 'tPipeL', label: 'Трубопроводные сети', second: true },
  { icon: 'tPipeL', label: 'Напорные трубопров...', second: true },
];

function Branch({ d, x, sign }: { d: string; x: number; sign?: '+' | '-' }) {
  return (
    <svg width={x === 13 ? 26 : 19} height="20" className="shrink-0" aria-hidden="true">
      <path d={d} fill="none" stroke="#9a9a9a" strokeDasharray="1 1" />
      {sign && (
        <g transform={`translate(${x - 4} 5.500)`}>
          <rect x=".5" y=".5" width="8" height="8" fill="#fff" stroke="#8c8c8c" />
          <path d={sign === '+' ? 'M2 4.500h5M4.500 2v5' : 'M2 4.500h5'} stroke="#3d5a96" />
        </g>
      )}
    </svg>
  );
}

function TreeRow({ node }: { node: Node }) {
  if (node.root) {
    return (
      <li className="flex items-center h-5">
        <Branch x={13} sign="-" d={node.second ? 'M13.500 0v10h11' : 'M24 10.500H13.500v10'} />
        <Icon name={node.icon} size={16} />
        <span className={`ml-1.5 whitespace-nowrap ${node.second ? '' : 'font-bold text-black text-[13px]'}`}>{node.label}</span>
      </li>
    );
  }
  return (
    <li className="flex items-center h-5">
      <Branch x={13} d={node.second ? '' : 'M13.500 0v20'} />
      <Branch x={8} sign={node.open ? '+' : undefined} d={node.last ? 'M8.500 0v10.500h10' : 'M8.500 0v20M8.500 10.500h10'} />
      <Icon name={node.icon} size={17} />
      <span className="ml-[7px] whitespace-nowrap">{node.label}</span>
    </li>
  );
}

const Grip = () => (
  <svg width="16" height="5" viewBox="0 0 16 5" className="shrink-0" aria-hidden="true"><path d="M0 1h16M0 4h16" stroke="#b5bac1" strokeDasharray="1 2" /></svg>
);

function Toolspace() {
  return (
    <aside className="flex flex-col w-[230px] shrink-0">
      <h2 className="flex items-center gap-1.5 h-[22px] mt-[3px] pl-1.5 bg-[#2d3341] text-[#e0e3e6] whitespace-nowrap">
        <svg width="4" height="9"><path d="M.5 0v9M3.500 0v9" stroke="#b5bac1" strokeDasharray="1 2" /></svg>
        ОБЛАСТЬ ИНСТРУМЕНТОВ
      </h2>
      <div className="flex items-center h-[30px] pl-[5px] pr-1 gap-2.5">
        <IconButton name="cube" size={16} className="mr-auto" />
        <IconButton name="panorama" size={16} />
        <IconButton name="preview" size={17} />
        <IconButton name="help" size={17} />
      </div>
      <div className="relative flex items-center h-5 border border-[#f2f2f2] bg-[#dfdfdf] text-[#222]">
        <select aria-label="Вид чертежа" className="flex-1 appearance-none bg-transparent pl-0.5 text-[10px] outline-none"><option>Просмотр активного чертежа</option></select>
        <span className="absolute right-0.5 pointer-events-none"><Icon name="chevronDown" size={10} /></span>
      </div>
      <div className="mt-0.5 bg-[#f0f0f0]">
        <div className="flex pl-px">
          <ul className="flex-1 h-[445px] pt-0.5 overflow-hidden bg-white text-[#2a2a2a]">
            {tree.map((n, i) => <TreeRow key={i} node={n} />)}
            <li className="flex pl-[45px]"><Icon name="tRoad" /></li>
          </ul>
          <div className="flex flex-col items-center w-[18px] pr-0.5">
            <button aria-label="Вверх" className="h-[19px]"><Icon name="chevronUp" size={10} /></button>
            <div className="w-4 h-[373px] bg-[#cdcdcd]" />
            <button aria-label="Вниз" className="mt-auto mb-1"><Icon name="chevronDown" size={10} /></button>
          </div>
        </div>
        <div className="flex items-center h-[18px]">
          <button aria-label="Влево" className="w-[19px] flex justify-center"><Icon name="chevronLeft" size={11} /></button>
          <div className="w-[131px] h-4 bg-[#cdcdcd]" />
          <button aria-label="Вправо" className="ml-auto mr-[22px]"><Icon name="chevronRight" size={11} /></button>
        </div>
      </div>
      <div className="flex-1 mt-1.5 mb-2.5 border border-[#8e959c]" />
    </aside>
  );
}

function SideTabs() {
  return (
    <div className="flex flex-col w-[22px] shrink-0 pt-[26px]">
      {['Навигатор', 'Параметры', 'Съемка', 'Панель инструмент...'].map((t, i) => (
        <button key={t} className={`flex items-center justify-center h-[134px] rounded-r border border-[#262c36] whitespace-nowrap ${i === 0 ? 'border-l-0 text-[#e0e3e6]' : 'bg-[#2d3341] text-[#b5bac1]'}`}>
          <span className="[writing-mode:vertical-rl] rotate-180">{t}</span>
        </button>
      ))}
    </div>
  );
}

let seed = 7;
const rnd = () => {
  seed = (seed * 16807) % 2147483647;
  return seed / 2147483647 - 0.5;
};

// contour line: walks between the given vertices with a small random deviation
function contour(pts: number[][], amp: number, step = 8) {
  let d = `M${pts[0][0]} ${pts[0][1]}`;
  for (let i = 1; i < pts.length; i++) {
    const [x0, y0] = pts[i - 1];
    const [x1, y1] = pts[i];
    const n = Math.max(1, Math.round(Math.hypot(x1 - x0, y1 - y0) / step));
    for (let k = 1; k <= n; k++) {
      const x = x0 + ((x1 - x0) * k) / n + rnd() * amp;
      const y = y0 + ((y1 - y0) * k) / n + rnd() * amp;
      d += `L${x.toFixed(1)} ${y.toFixed(1)}`;
    }
  }
  return d;
}

const edge = [[210, 62], [380, 92], [500, 118], [620, 140], [768, 172], [735, 370], [690, 570], [650, 760], [614, 940], [470, 912], [360, 890], [220, 868], [68, 834], [100, 660], [140, 460], [165, 320], [210, 62]];
const borders = [-9, -6, -3, 0, 3, 6, 9].map((o) =>
  contour(edge.map(([x, y]) => [x + (x > 415 ? o : -o) * 0.8, y + (y > 500 ? o : -o) * 0.8]), 7, 9),
);
const ticks = Array.from({ length: 90 }, (_, i) => {
  const t = (i % 45) / 45;
  const bow = t < 0.5 ? 6 * t : 6 * (1 - t);
  const x = i < 45 ? 200 - 142 * t + bow * 2 : 780 - 156 * t;
  const y = i < 45 ? 80 + 740 * t : 180 + 760 * t;
  return `M${(x + rnd() * 5).toFixed(1)} ${y.toFixed(1)}l${i % 2 ? 2 : -2} ${4 + (i % 4) * 2}`;
}).join('');

const contours = [
  [[212, 190], [225, 175], [245, 182], [265, 183], [290, 192], [292, 222], [298, 205], [325, 212], [333, 240], [350, 238], [368, 268], [350, 262], [330, 262], [300, 255], [280, 268], [228, 265], [235, 255], [290, 272], [340, 262], [360, 285], [362, 315], [375, 318], [395, 290], [392, 330], [350, 338], [345, 372], [330, 385], [310, 350], [305, 330], [290, 305], [300, 290], [290, 280], [265, 270]],
  [[212, 190], [220, 210], [203, 235], [208, 262], [195, 280], [200, 305], [230, 312], [232, 295], [240, 320], [250, 345], [275, 345], [295, 320], [305, 330]],
  [[300, 290], [320, 298], [340, 285], [345, 265], [365, 290]],
  [[205, 355], [212, 375], [180, 395], [178, 415], [190, 432], [215, 425], [232, 398], [245, 400], [255, 418], [300, 415], [320, 428], [340, 412], [362, 425], [370, 400], [352, 395], [335, 375], [310, 362], [280, 355], [250, 348], [215, 348], [205, 355]],
  [[215, 372], [240, 355], [262, 360], [268, 385], [250, 370], [235, 380], [215, 372]],
  [[240, 345], [255, 368], [270, 345], [262, 380]],
  [[210, 430], [225, 435], [238, 445], [222, 455], [212, 445]],
  [[200, 475], [212, 470], [232, 490], [228, 500], [205, 492], [200, 475]],
  [[630, 232], [655, 240], [660, 265], [655, 290], [635, 305], [625, 330], [600, 335], [605, 315], [610, 295], [590, 280], [590, 262], [612, 258], [618, 235], [630, 232]],
  [[640, 320], [638, 295], [655, 310], [662, 300], [660, 325]],
  [[585, 345], [545, 342], [525, 360], [528, 385], [545, 392], [560, 372], [580, 380], [590, 400], [605, 415], [607, 440], [620, 450], [632, 470], [620, 495], [600, 485], [580, 510], [556, 510], [545, 490], [550, 470], [535, 455], [505, 445], [510, 412], [545, 408], [550, 430], [580, 435], [575, 448], [600, 440], [610, 465], [590, 460], [585, 478], [545, 480]],
  [[540, 440], [565, 435], [580, 452], [568, 470], [560, 495], [548, 505]],
  [[585, 345], [620, 340], [640, 330], [670, 320], [685, 350], [703, 400], [685, 435], [680, 470], [660, 500], [660, 540], [635, 548], [600, 550], [570, 545], [552, 530], [556, 510]],
  [[140, 535], [190, 532], [240, 548], [265, 565], [275, 582], [300, 578], [310, 562], [325, 590], [345, 575], [365, 598], [370, 625], [382, 658], [395, 632], [430, 630], [415, 622], [425, 600], [445, 612], [460, 595], [490, 612], [530, 622], [570, 625], [580, 612], [640, 630], [652, 660], [648, 700], [640, 790], [610, 830], [600, 860], [570, 885], [540, 905], [500, 895], [480, 880], [415, 872]],
  [[140, 535], [130, 580], [115, 640], [102, 700], [95, 770], [110, 790], [108, 815], [125, 830], [145, 822], [150, 800], [185, 790], [205, 780], [230, 795], [255, 778], [280, 795], [325, 810], [370, 803], [398, 812], [412, 850], [415, 872]],
  [[305, 780], [320, 800], [355, 805]],
  [[210, 770], [225, 765], [240, 785], [225, 788]],
  [[410, 690], [415, 668], [428, 680], [432, 698], [420, 695]],
].map((p) => contour(p, 10, 7));

const blobs = [
  [224, 158, 7], [279, 161, 4], [371, 175, 1], [234, 202, 5], [365, 225, 7], [441, 229, 5], [395, 273, 8], [296, 257, 4], [374, 383, 6], [344, 375, 8], [367, 457, 4],
  [308, 455, 1], [490, 280, 1], [430, 283, 1], [552, 195, 4], [562, 207, 1], [617, 205, 8], [638, 207, 7], [718, 244, 3], [620, 275, 6], [552, 307, 11], [570, 276, 8], [550, 270, 6], [665, 279, 5],
  [692, 307, 4], [645, 300, 5], [585, 335, 7], [680, 330, 6], [512, 377, 5], [585, 578, 9], [617, 570, 1], [196, 522, 6], [215, 525, 5], [240, 530, 4], [262, 537, 4], [308, 543, 9], [250, 565, 5], [430, 605, 5],
  [452, 656, 7], [485, 675, 4], [382, 690, 3], [448, 692, 5], [402, 720, 8], [428, 737, 1], [425, 700, 5], [299, 755, 8], [332, 755, 3], [333, 773, 4], [128, 765, 6], [158, 780, 3], [134, 805, 6],
  [232, 778, 8], [250, 806, 4], [548, 886, 7], [592, 832, 5], [90, 805, 3], [666, 600, 7], [365, 755, 1],
].map(([x, y, r]) => contour([[x + r, y], [x + r / 2, y + r], [x - r / 2, y + r], [x - r, y], [x - r / 2, y - r], [x + r / 2, y - r]], r * 0.7, 12) + 'Z');

function SitePlan() {
  return (
    <svg viewBox="0 0 840 990" width="280" height="330" className="absolute left-[495px] top-[99px]" fill="none" stroke="#eceef0" strokeWidth="2.800" aria-label="Чертеж">
      {borders.map((d, i) => <path key={i} d={d} strokeWidth="2.400" />)}
      <path d={ticks} strokeWidth="3" />
      {contours.map((d, i) => <path key={i} d={d} />)}
      {blobs.map((d, i) => <path key={i} d={d} />)}
      {[5, 11, 17].map((r) => <circle key={r} cx="175" cy="356" r={r} strokeWidth="3.500" />)}
      {[0, 10, 15, 20, 25].map((o) => (
        <path key={o} d={`M${358 - o} ${872 + o / 2}V${852 - o}Q${358 - o} ${838 - o} ${366 - o / 2} ${838 - o}H${370 + o / 2}Q${378 + o} ${838 - o} ${378 + o} ${852 - o}L${374 + o} ${876 + o / 2}Z`} strokeWidth="3" />
      ))}
      <path d="M205 60l3-18M212 60l2-12M774 172l6-12M60 836l-8 8M620 945l2 10M252 48v4M604 945l-2 8M300 66l50 6M500 104l60 10" strokeWidth="4" />
    </svg>
  );
}

function ViewCube() {
  const mark = 'absolute -rotate-90 text-lg leading-[18px] text-[#b0b3b6]';
  return (
    <div className="absolute right-[21px] top-11 w-[106px] h-[106px]">
      <div className="absolute inset-0 rounded-full border-[11px] border-[#454b52]" />
      <span className={`${mark} inset-x-0 -top-1.5 text-center`}>В</span>
      <span className={`${mark} inset-x-0 -bottom-1.5 text-center`}>З</span>
      <span className={`${mark} -left-1 top-11`}>С</span>
      <span className={`${mark} -right-1.5 top-11`}>Ю</span>
      <button className="absolute left-[30px] top-[30px] w-[46px] h-[46px] flex items-center justify-center bg-[#b3b4b6] text-[#3c4148]">
        <span className="absolute inset-2 bg-[#a8adb8]" />
        <span className="relative -rotate-90">Сверху</span>
      </button>
      <button className="absolute left-[30px] top-[130px] w-[46px] h-[18px] flex items-center justify-center gap-1.5 rounded bg-[#9b9eac] text-[11px] text-[#5a5e69]">МСК<Caret color="#b4b6c2" /></button>
    </div>
  );
}

function NavBar() {
  return (
    <div className="absolute right-0.5 top-[217px] w-[34px] h-[216px] rounded bg-[#596067] shadow">
      <svg width="34" height="216" viewBox="0 0 34 216" fill="none" stroke="#41474e" strokeWidth="1.300" aria-label="Панель навигации">
        <circle cx="28" cy="5" r="3.500" /><path d="M26 3l4 4M30 3l-4 4" />
        <path d="M28 18v12a11 11 0 1 1-11-12zM17 24a6 6 0 1 0 .1 0M12 35c2-3 8-3 10 0" />
        <path d="M15 51h5l-2.500 2z" /><path d="M2 58h30" stroke="#666c73" />
        <path d="M9 77c-3-4-5-5-4-7l5 4-2-10c1-2 2-1 3 1l1 5V62c1-2 3-2 3 0l1 8 2-7c1-1 3-1 3 1l-1 8 3-5c1-1 3 0 2 2-2 5-2 9-5 13-3 4-8 3-11-5z" />
        <path d="M5 92l16 14M21 92L5 106M5 96v-4h4M17 92h4v4M5 102v4h4" /><circle cx="22" cy="107" r="5" /><path d="M26 111l4 4" strokeWidth="2.500" />
        <path d="M15 122h5l-2.500 2z" />
        <path d="M15 152v-16h-3l5-6 5 6h-3v16zM6 143c0-4 22-4 22 0s-14 5-22 2M10 141l-4 4 5 3" />
        <path d="M15 162h5l-2.500 2z" /><path d="M2 169h30" stroke="#666c73" />
        <path d="M5 174h6v6H5zM14 174h6v6h-6zM23 174h6v6h-6zM5 184h17v13H5z" /><path d="M11 187l6 3.500-6 3.500z" fill="#41474e" />
        <circle cx="28" cy="210" r="3.500" /><path d="M26 210h4" />
      </svg>
    </div>
  );
}

function CommandLine() {
  const hist = 'w-fit h-4 px-0.5 leading-4 rounded-sm bg-[#373b40] text-[#83878c] whitespace-pre';
  return (
    <div className="absolute inset-x-0 bottom-0 mx-auto w-[853px] max-w-full font-['DejaVu_Sans_Mono','Liberation_Mono',monospace] text-xs">
      <div className="flex flex-col gap-[5px] ml-[66px] mb-[5px]">
        <p className={`${hist} opacity-80`}>Команда:</p>
        <p className={hist}>Команда:  Выполняется регенерация модели.</p>
        <p className={hist}>Команда:  Выполняется регенерация модели.</p>
      </div>
      <div className="flex items-center h-[27px]">
        <div className="flex items-center justify-between w-[60px] h-full px-1 bg-[#2b303b] shrink-0">
          <svg width="6" height="18"><path d="M1 0v18M5 0v18" stroke="#c5c8cb" strokeWidth="1.500" strokeDasharray="2 1" /></svg>
          <IconButton name="cross" size={11} /><IconButton name="wrench" size={16} />
        </div>
        <div className="flex items-center flex-1 h-full px-1 rounded-sm bg-[#bbbcbe]">
          <button aria-label="Последние команды" className="flex items-center gap-0.5"><Icon name="console" size={17} /><Caret big color="#444" /></button>
          <input aria-label="Команда" placeholder="Введите команду" className="flex-1 ml-1.5 bg-transparent italic outline-none placeholder:text-[#5d6064]" />
          <button aria-label="История"><svg width="8" height="5" viewBox="0 0 10 6"><path d="M0 6h10L5 0z" fill="#555" /></svg></button>
        </div>
      </div>
    </div>
  );
}

function Canvas() {
  return (
    <main className="relative flex-1 ml-1.5 mb-[5px] bg-[#202830] text-[#e0e3e6] overflow-hidden">
      <p className="pl-[3px] pt-[5px]">[−][Сверху][2D-каркас]</p>
      <div className="absolute right-[10px] top-2 flex items-center gap-2.5">
        <button aria-label="Свернуть вид" className="w-3 h-[3px] mt-1 bg-[#e6e6e6]" />
        <button aria-label="Восстановить вид"><svg width="12" height="12" viewBox="0 0 12 12" fill="none" stroke="#e6e6e6" strokeWidth="1.500"><path d="M1 4h7v7H1zM4 4V1h7v7H8M3 7h3" /></svg></button>
        <IconButton name="cross" label="Закрыть вид" size={12} />
      </div>
      <SitePlan />
      <ViewCube />
      <NavBar />
      <svg className="absolute left-[856px] top-[269px]" width="82" height="82" fill="none" stroke="#e6e8ea" aria-hidden="true">
        <path d="M41.500 0v38M41.500 44v38M0 41.500h38M44 41.500h38M38.500 38.500h5v5h-5z" />
      </svg>
      <svg className="absolute left-3 bottom-2" width="72" height="74" fill="none" stroke="#e6e8ea" aria-label="ПСК">
        <path d="M52.500 14v50M1 64.500h50M48.500 60.500h8v8h-8zM56 2l12 12M68 2L56 14M3 48l5 6 5-6M8 54v7" />
      </svg>
      <CommandLine />
    </main>
  );
}

const side = [
  'sArc', 'sAngle', 'sLens', 'sFlag', 'sSheet', 'sGlobe', 'sGlobe2', 'sPtHash', 'sPtA', 'sPtCur', 'sPtZoom', 'sFrame', 'sTee', '-', 'sCursorPt', '-',
  'sHook', 'sBlob', 'sPtHook', '-', 'sCorner', 'sPoly', 'sZig', 'sPar', 'sCirc', 'sDim', 'sArcCalc',
];

function SideBar() {
  return (
    <div className="flex flex-col w-[26px] ml-[3px] mr-[3px] shrink-0 mb-[5px]">
      <div className="flex flex-col items-center pt-[3px] border border-[#2a313c]">
        <Grip />
        {side.map((n, i) => (n === '-' ? <hr key={i} className="w-[22px] my-[3px] border-t-2 border-[#d5d7da]" /> : <IconButton key={n} name={n} size={16} className="w-6 h-[23px]" />))}
      </div>
      <div className="flex flex-col items-center h-[44px] pt-[3px] border border-b-0 border-[#2a313c] overflow-hidden">
        <Grip />
        <IconButton name="sCursorPt" size={16} className="w-6 h-5 mt-0.5" />
        <Icon name="sBlocks" size={16} />
      </div>
    </div>
  );
}

const cell = 'flex items-center justify-center h-[25px] bg-[#3b4453] whitespace-nowrap shrink-0';

function Status() {
  return (
    <footer className="flex items-center h-[32px] pb-1.5 pt-px pr-0.5 text-[#e0e3e6]">
      <div className="flex items-center h-[25px] pl-2">
        <button className="w-[83px] h-[25px] bg-[#3b4453] font-bold text-white [clip-path:polygon(9px_0,100%_0,calc(100%_-_9px)_100%,0_100%)]">Модель</button>
        <button className="mx-2">Layout1</button>
        <Slash />
        <IconButton name="plus" label="Новый лист" size={13} className="mx-2.5" />
        <Slash />
      </div>
      <div className="flex items-center gap-[3px] ml-auto">
        <button className={`${cell} w-[59px] text-white`}>МОДЕЛЬ</button>
        <div className={`${cell} gap-2 w-[67px]`}><Icon name="grid" /><Icon name="snap" size={14} /><Caret big /></div>
        <div className={`${cell} gap-2 w-[204px]`}>
          <Icon name="ortho" size={17} /><Icon name="polar" size={18} /><Caret big /><Icon name="iso" size={18} /><Caret big />
          <span className="flex gap-0.5">
            <button aria-label="otrack" className="flex items-center justify-center w-6 h-[25px] bg-[#5b8fc4]"><Icon name="otrack" size={16} /></button>
            <button aria-label="osnap" className="flex items-center justify-center w-6 h-[25px] bg-[#5b8fc4]"><Icon name="osnap" size={17} /></button>
          </span>
          <Caret big /><Icon name="weight" size={17} />
        </div>
        <div className={`${cell} gap-2 w-[118px] justify-start`}>
          <button aria-label="annotations" className="flex items-center justify-center w-6 h-[25px] bg-[#5b8fc4]"><Icon name="annoBlue" /></button>
          <Icon name="annoFlash" size={16} /><Icon name="anno" size={15} />
          <span className="flex items-center gap-1 text-[11px]">1:1_1<Caret big /></span>
        </div>
        <div className={`${cell} gap-2 w-10`}><Icon name="gear" size={17} /><Caret big /></div>
        <IconButton name="plus" size={15} className="w-[25px] h-[25px] bg-[#3b4453]" />
        <div className={`${cell} gap-2 w-[118px]`}><Icon name="ruler" size={16} /><span>Десятичные</span><Caret big /></div>
        <IconButton name="shapes" size={17} className="w-[25px] h-[25px] bg-[#3b4453]" />
        <div className={`${cell} gap-2.5 w-[55px]`}><Icon name="stack" size={16} />1.4</div>
        <div className={`${cell} w-[3px]`} />
        <div className={`${cell} gap-2 w-[50px]`}><Icon name="full" size={17} /><Icon name="burger" size={17} /></div>
      </div>
    </footer>
  );
}

export default function App() {
  return (
    <div className="flex min-h-screen pt-[3px] pl-1 bg-[linear-gradient(#fbb0bd_90px,#f3f6f9_90px)] font-['Noto_Sans','Open_Sans',sans-serif] text-xs">
      <div className="flex flex-col flex-1 min-w-0 px-0.5 border border-[#2f7796] bg-[#212932]">
        <Title />
        <Menu />
        <Ribbon />
        <DocTabs />
        <div className="flex flex-1 pt-1 bg-[#3b4453]">
          <Toolspace />
          <SideTabs />
          <Canvas />
          <SideBar />
        </div>
        <Status />
      </div>
    </div>
  );
}
